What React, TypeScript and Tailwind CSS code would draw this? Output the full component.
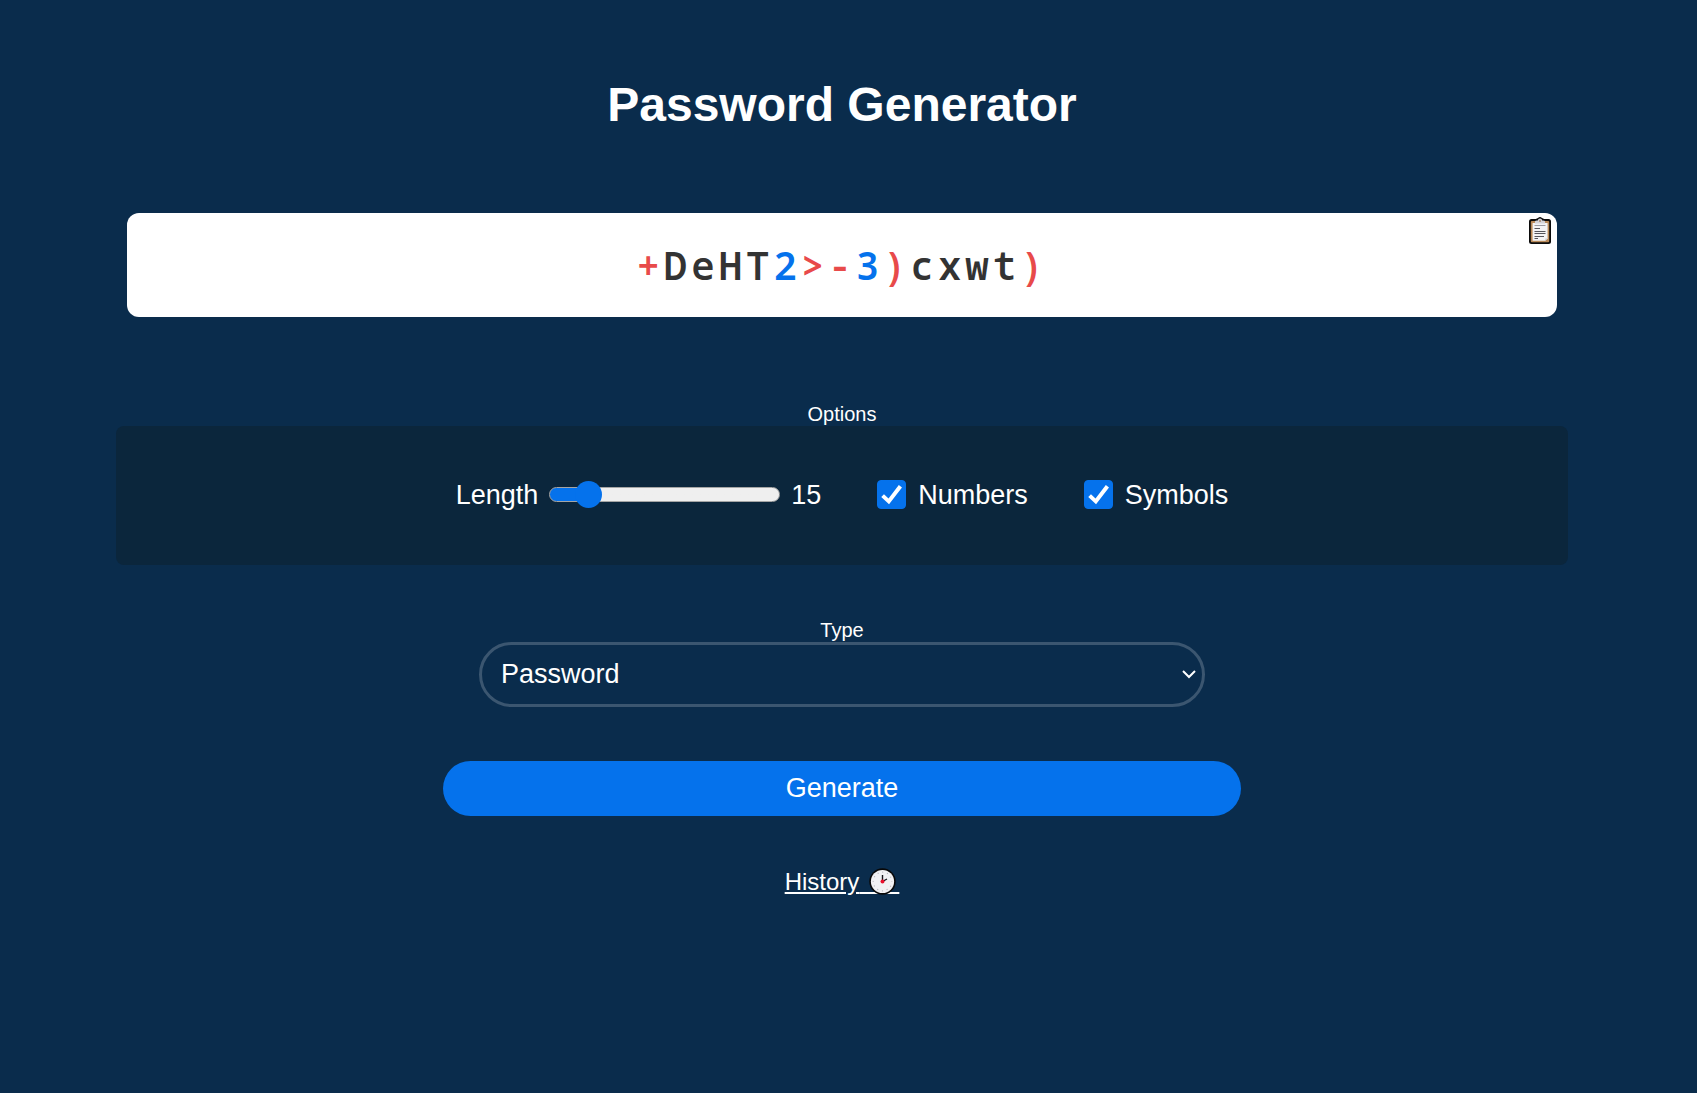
import { useState } from "react";

const PASSWORD = "+DeHT2>-3)cxwt)";

function charColor(ch: string) {
  if (/[0-9]/.test(ch)) return "text-[#0572ec]";
  if (/[A-Za-z]/.test(ch)) return "text-[#333333]";
  return "text-[#e84a4a]";
}

function ClipboardIcon() {
  return (
    <svg viewBox="0 0 22 27" className="h-[27px] w-[22px]" aria-hidden="true">
      <rect x="0" y="2" width="22" height="25" rx="2.5" fill="#0b0b0b" />
      <path d="M6 3.5Q7 1 9 1Q11 -1 13 1Q15 1 16 3.5Z" fill="#0b0b0b" />
      <rect x="1.8" y="4" width="18.4" height="21.2" rx="1" fill="#b98a5a" />
      <path d="M3.6 6H18.6V21.6L16.4 23.8H3.6Z" fill="#f4f4f6" />
      <path d="M18.6 21.6H16.4V23.8Z" fill="#c9c9cf" />
      <path d="M6 6.4V4.6Q6 3.6 8 3.6H8.8Q9 1.6 11 1.6T13.2 3.6H14Q16 3.6 16 4.6V6.4Z" fill="#d4d4da" />
      <circle cx="11" cy="4" r="1" fill="#a98569" />
      <g stroke="#55555c" strokeWidth="1">
        <path d="M5.5 8.5H16.5" stroke="#9a9aa2" />
        <path d="M5.5 11.5H11M5.5 14.5H16.5M5.5 16.5H16.5M5.5 19.5H15M5.5 21.5H9" />
      </g>
    </svg>
  );
}

function ClockIcon() {
  return (
    <svg viewBox="0 0 27 27" className="inline-block h-[27px] w-[27px]" aria-hidden="true">
      <circle cx="13.5" cy="13.5" r="13.2" fill="#080808" />
      <circle cx="13.5" cy="13.5" r="11.6" fill="#f1f1f3" />
      <circle cx="13.5" cy="13.5" r="9.3" fill="none" stroke="#b4b4ba" strokeWidth="1.2" strokeDasharray="1 3.87" strokeDashoffset="0.5" />
      <path d="M13.5 13.5V7M13.5 13.5L18 11" stroke="#16161a" strokeWidth="1.4" />
      <circle cx="13.5" cy="13.5" r="2" fill="#e8112d" />
    </svg>
  );
}

function Check({ id, label }: { id: string; label: string }) {
  const [on, setOn] = useState(true);
  return (
    <div className="flex items-center gap-3">
      <span className="relative flex">
        <input
          id={id}
          type="checkbox"
          checked={on}
          onChange={(e) => setOn(e.target.checked)}
          className="h-[29px] w-[29px] appearance-none rounded border border-[#767676] bg-white checked:border-[#0572ec] checked:bg-[#0572ec]"
        />
        {on && (
          <svg viewBox="0 0 29 29" className="pointer-events-none absolute inset-0" aria-hidden="true">
            <path d="M5.6 15.6L11.8 21.4L23.4 6.2" fill="none" stroke="#fff" strokeWidth="4" />
          </svg>
        )}
      </span>
      <label htmlFor={id}>{label}</label>
    </div>
  );
}

export default function App() {
  const [length, setLength] = useState(15);
  return (
    <main className="flex min-h-screen flex-col items-center bg-[#0a2c4c] pt-[77px] pr-[129px] pb-16 pl-[116px] font-['Liberation_Sans',Arial,sans-serif] text-white">
      <h1 className="text-[48px] leading-[56px] font-bold">Password Generator</h1>

      <section className="mt-20 w-full px-[11px]">
        <div className="relative flex h-[104px] items-center justify-center rounded-xl bg-white">
          <output className="font-['Noto_Sans_Mono','Noto_Sans_Mono_CJK_SC','DejaVu_Sans_Mono',monospace] text-[39px] leading-[48px] font-semibold tracking-[4px]">
            {PASSWORD.split("").map((ch, i) => (
              <span key={i} className={charColor(ch)}>{ch}</span>
            ))}
          </output>
          <button type="button" aria-label="Copy password" className="absolute top-1 right-1.5">
            <ClipboardIcon />
          </button>
        </div>
      </section>

      <fieldset className="mt-[85px] w-full">
        <legend className="mx-auto text-[20px] leading-6">Options</legend>
        <div className="flex h-[139px] items-center justify-center gap-14 rounded-lg bg-[#0b263c] pb-0.5 text-[27px] leading-8">
          <div className="flex items-center gap-[11px]">
            <label htmlFor="length">Length</label>
            <input
              id="length"
              type="range"
              min={8}
              max={64}
              value={length}
              onChange={(e) => setLength(Number(e.target.value))}
              className="h-[15px] w-[231px] appearance-none rounded-full border border-[#a5a5a5] bg-linear-to-r from-[#0572ec] from-15% to-[#efefef] to-15% [&::-webkit-slider-thumb]:size-[27px] [&::-webkit-slider-thumb]:appearance-none [&::-webkit-slider-thumb]:rounded-full [&::-webkit-slider-thumb]:bg-[#0572ec]"
            />
            <span>{length}</span>
          </div>
          <Check id="numbers" label="Numbers" />
          <Check id="symbols" label="Symbols" />
        </div>
      </fieldset>

      <div className="mt-[53px] flex w-full flex-col items-center">
        <label htmlFor="type" className="text-[20px] leading-6">Type</label>
        <div className="relative w-1/2">
          <select
            id="type"
            className="h-[65px] w-full appearance-none rounded-full border-3 border-[#3b5670] bg-transparent px-[19px] text-[27px]"
          >
            <option>Password</option>
            <option>Passphrase</option>
          </select>
          <svg viewBox="0 0 14 9" className="pointer-events-none absolute top-[28px] right-[9px] h-[9px] w-[14px]" aria-hidden="true">
            <path d="M1 1L7 7L13 1" fill="none" stroke="#fff" strokeWidth="2" />
          </svg>
        </div>
      </div>

      <button type="button" className="mt-[54px] h-[55px] w-[55%] rounded-full bg-[#0572ec] text-[27px]">
        Generate
      </button>

      <a href="#history" className="relative mt-[52px] block text-[24px] leading-7 whitespace-pre underline underline-offset-2">
        {"History"}
        {"      "}
        <span className="absolute top-0 right-[3px] flex">
          <ClockIcon />
        </span>
      </a>
    </main>
  );
}
